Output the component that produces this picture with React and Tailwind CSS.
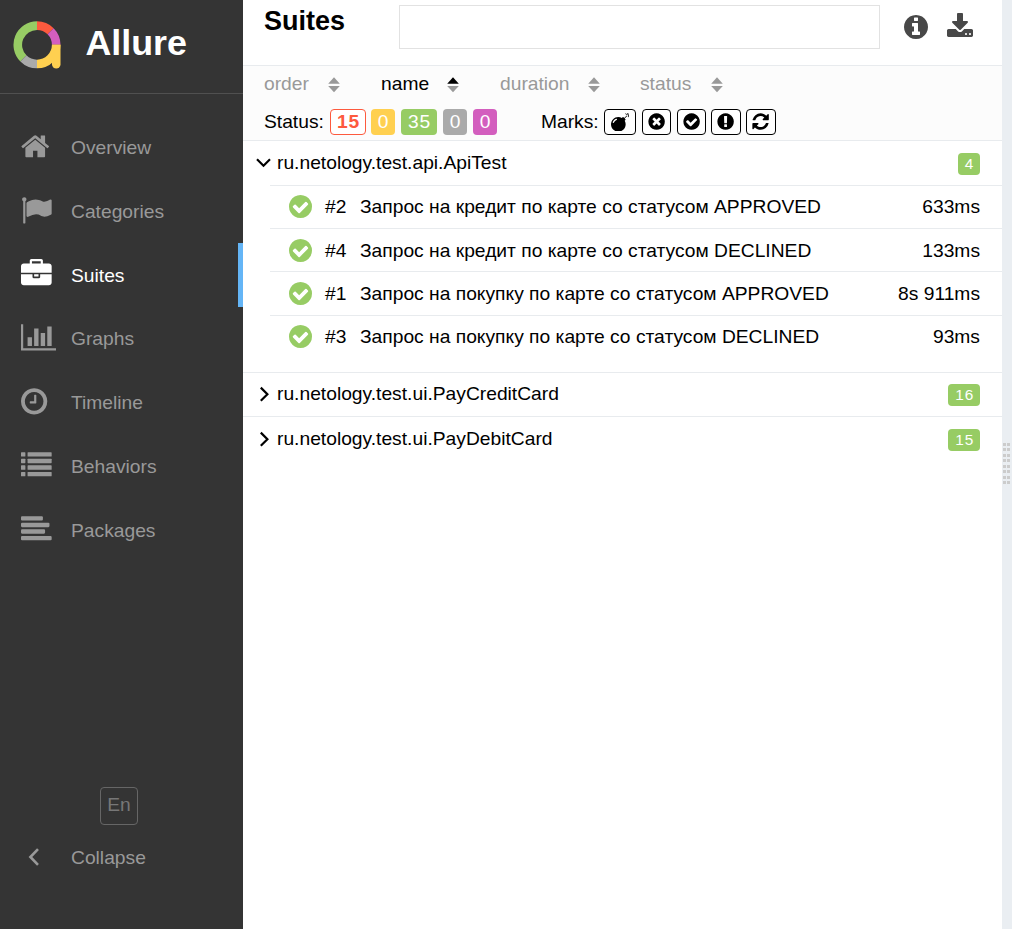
const CIRCLE =
  'm0 0q0 209-103 385.5t-279.5 279.5-385.5 103-385.5-103-279.5-279.5-103-385.5 103-385.5 279.5-279.5 385.5-103 385.5 103 279.5 279.5 103 385.5z';

const PATHS = {
  home: 'M1472 992v480q0 26-19 45t-45 19h-384v-384h-256v384h-384q-26 0-45-19t-19-45v-480q0-1 .5-3t.5-3l575-474 575 474q1 2 1 6zm223-69l-62 74q-8 9-21 11h-3q-13 0-21-7l-692-577-692 577q-12 8-24 7-13-2-21-11l-62-74q-8-10-7-23.5t11-21.5l719-599q32-26 76-26t76 26l244 204v-195q0-14 9-23t23-9h192q14 0 23 9t9 23v408l219 182q10 8 11 21.5t-7 23.5z',
  flag: 'M320 256q0 72-64 110v1266q0 13-9.5 22.5t-22.5 9.5h-64q-13 0-22.5-9.5t-9.5-22.5v-1266q-64-38-64-110 0-53 37.5-90.5t90.5-37.5 90.5 37.5 37.5 90.5zm1472 64v763q0 25-12.5 38.5t-39.5 27.5q-215 116-369 116-61 0-123.5-22t-108.5-48-115.5-48-142.5-22q-192 0-464 146-17 9-33 9-26 0-45-19t-19-45v-742q0-32 31-55 21-14 79-43 236-120 421-120 107 0 200 29t219 88q38 19 88 19 54 0 117.5-21t110-47 88-47 54.5-21q26 0 45 19t19 45z',
  briefcase: 'M640 256h512v-128h-512v128zm1152 640v480q0 66-47 113t-113 47h-1472q-66 0-113-47t-47-113v-480h672v160q0 26 19 45t45 19h320q26 0 45-19t19-45v-160h672zm-768 0v128h-256v-128h256zm768-480v384h-1792v-384q0-66 47-113t113-47h352v-160q0-40 28-68t68-28h576q40 0 68 28t28 68v160h352q66 0 113 47t47 113z',
  chart: 'M640 896v512h-256v-512h256zm384-512v1024h-256v-1024h256zm1024 1152v128h-2048v-1536h128v1408h1920zm-640-896v768h-256v-768h256zm384-384v1152h-256v-1152h256z',
  clock: 'M1024 544v448q0 14-9 23t-23 9h-320q-14 0-23-9t-9-23v-64q0-14 9-23t23-9h224v-352q0-14 9-23t23-9h64q14 0 23 9t9 23zm416 352q0-148-73-273t-198-198-273-73-273 73-198 198-73 273 73 273 198 198 273 73 273-73 198-198 73-273z',
  check: 'M1412 734q0-28-18-46l-91-90q-19-19-45-19t-45 19l-408 407-226-226q-19-19-45-19t-45 19l-91 90q-18 18-18 46 0 27 18 45l362 362q19 19 45 19 27 0 46-19l543-543q18-18 18-45z',
  times: 'M1277 1122q0-26-19-45l-181-181 181-181q19-19 19-45 0-27-19-46l-90-90q-19-19-46-19-26 0-45 19l-181 181-181-181q-19-19-45-19-27 0-46 19l-90 90q-19 19-19 46 0 26 19 45l181 181-181 181q-19 19-19 45 0 27 19 46l90 90q19 19 46 19 26 0 45-19l181-181 181 181q19 19 45 19 27 0 46-19l90-90q19-19 19-46z',
  exclamation: 'M1024 1375v-190q0-14-9-23.5t-22-9.5h-192q-13 0-23 10t-10 23v190q0 13 10 23t23 10h192q13 0 22-9.5t9-23.5zm-2-344l18-621q0-12-10-18-10-8-24-8h-220q-14 0-24 8-10 6-10 18l17 621q0 10 10 17.5t24 7.5h185q14 0 23.5-7.5t10.5-17.5z',
  info: 'M1152 1376v-160q0-14-9-23t-23-9h-96v-512q0-14-9-23t-23-9h-320q-14 0-23 9t-9 23v160q0 14 9 23t23 9h96v320h-96q-14 0-23 9t-9 23v160q0 14 9 23t23 9h448q14 0 23-9t9-23zm-128-896v-160q0-14-9-23t-23-9h-192q-14 0-23 9t-9 23v160q0 14 9 23t23 9h192q14 0 23-9t9-23z',
  refresh: 'M1639 1056q0 5-1 7-64 268-268 434.5t-478 166.5q-146 0-282.5-55t-243.5-157l-129 129q-19 19-45 19t-45-19-19-45v-448q0-26 19-45t45-19h448q26 0 45 19t19 45-19 45l-137 137q71 66 161 102t187 36q134 0 250-65t186-179q11-17 53-117 8-23 30-23h192q13 0 22.5 9.5t9.5 22.5zm25-800v448q0 26-19 45t-45 19h-448q-26 0-45-19t-19-45 19-45l138-138q-148-137-349-137-134 0-250 65t-186 179q-11 17-53 117-8 23-30 23h-199q-13 0-22.5-9.5t-9.5-22.5v-7q65-268 270-434.5t480-166.5q146 0 284 55.5t245 156.5l130-129q19-19 45-19t45 19 19 45z',
  bomb: 'M571 589q-10-25-34-35t-49 0q-108 44-191 127t-127 191q-10 25 0 49t35 34q13 5 24 5 42 0 60-40 34-84 98.5-148.5t148.5-98.5q25-11 35-35t0-49zm942-356l46 46-244 243 68 68q19 19 19 45.5t-19 45.5l-64 64q89 161 89 343 0 143-55.5 273.5t-150 225-225 150-273.5 55.5-273.5-55.5-225-150-150-225-55.5-273.5 55.5-273.5 150-225 225-150 273.5-55.5q182 0 343 89l64-64q19-19 45.5-19t45.5 19l68 68zm8-56q-10 10-22 10-13 0-23-10l-91-90q-9-10-9-23t9-23q10-9 23-9t23 9l90 91q10 9 10 22.5t-10 22.5zm230 230q-11 9-23 9t-23-9l-90-91q-10-9-10-22.5t10-22.5q9-10 22.5-10t22.5 10l91 90q9 10 9 23t-9 23zm41-183q0 14-9 23t-23 9h-96q-14 0-23-9t-9-23 9-23 23-9h96q14 0 23 9t9 23zm-192-192v96q0 14-9 23t-23 9-23-9-9-23v-96q0-14 9-23t23-9 23 9 9 23zm151 55l-91 90q-10 10-22 10-13 0-23-10-10-9-10-22.5t10-22.5l90-91q10-9 23-9t23 9q9 10 9 23t-9 23z',
  download: 'M1344 1344q0-26-19-45t-45-19-45 19-19 45 19 45 45 19 45-19 19-45zm256 0q0-26-19-45t-45-19-45 19-19 45 19 45 45 19 45-19 19-45zm128-224v320q0 40-28 68t-68 28h-1472q-40 0-68-28t-28-68v-320q0-40 28-68t68-28h465l135 136q58 56 136 56t136-56l136-136h464q40 0 68 28t28 68zm-325-569q17 41-14 70l-448 448q-18 19-45 19t-45-19l-448-448q-31-29-14-70 17-39 59-39h256v-448q0-26 19-45t45-19h256q26 0 45 19t19 45v448h256q42 0 59 39z',
};

const CIRCLED = ['clock', 'check', 'times', 'exclamation', 'info'];

function Glyph({ name, viewBox = '0 0 1792 1792', className }) {
  if (name === 'list') {
    return (
      <svg viewBox={viewBox} className={className} fill="currentColor">
        {[128, 512, 896, 1280].map((y) => (
          <g key={y}>
            <rect x="0" y={y} width="256" height="256" rx="32" />
            <rect x="384" y={y} width="1408" height="256" rx="32" />
          </g>
        ))}
      </svg>
    );
  }
  if (name === 'align') {
    return (
      <svg viewBox={viewBox} className={className} fill="currentColor">
        <rect y="128" width="1280" height="256" rx="64" />
        <rect y="512" width="1664" height="256" rx="64" />
        <rect y="896" width="1408" height="256" rx="64" />
        <rect y="1280" width="1792" height="256" rx="64" />
      </svg>
    );
  }
  const d = CIRCLED.includes(name) ? PATHS[name] + 'M1664 896' + CIRCLE : PATHS[name];
  return (
    <svg viewBox={viewBox} className={className} fill="currentColor" fillRule="evenodd">
      <path d={d} />
    </svg>
  );
}

function Logo() {
  return (
    <svg viewBox="0 0 48 48" className="h-12 w-12" fill="none" strokeWidth="8.6">
      <path d="M24 4.6A19.2 19.2 0 0 1 37.58 10.22" stroke="#fd5a3e" />
      <path d="M37.58 10.22A19.2 19.2 0 0 1 43.2 23.8" stroke="#d35ebe" />
      <path d="M10.42 37.38A19.2 19.2 0 0 1 24 4.6" stroke="#97cc64" />
      <path d="M24 43A19.2 19.2 0 0 1 10.42 37.38" stroke="#aaa" />
      <path d="M43.2 23.8A19.2 19.2 0 0 1 24 43" stroke="#ffd050" />
      <path d="M39 23.8h8.5v19.5a4.25 4.25 0 0 1-8.5 0z" fill="#ffd050" stroke="none" />
    </svg>
  );
}

const NAV = [
  { icon: 'home', label: 'Overview', viewBox: '64 0 1792 1792' },
  { icon: 'flag', label: 'Categories' },
  { icon: 'briefcase', label: 'Suites', active: true },
  { icon: 'chart', label: 'Graphs', viewBox: '0 0 2048 1792', wide: true },
  { icon: 'clock', label: 'Timeline', viewBox: '128 0 1792 1792' },
  { icon: 'list', label: 'Behaviors' },
  { icon: 'align', label: 'Packages' },
];

function Sidebar() {
  return (
    <aside className="flex w-[243px] shrink-0 flex-col bg-[#343434] text-[#999]">
      <div className="flex h-[94px] items-center border-b border-[#505050] pb-1 pl-[12.5px]">
        <Logo />
        <span className="ml-[25px] pb-px text-[35.8px] leading-none font-bold text-white">Allure</span>
      </div>
      <nav className="mt-[21.3px]">
        {NAV.map((item) => (
          <div
            key={item.label}
            className={
              'flex h-[63.85px] items-center pl-[21px] ' +
              (item.active ? 'border-r-5 border-[#64b5f6] text-white' : '')
            }
          >
            <div className="w-[50px] pb-[2px]">
              <Glyph
                name={item.icon}
                viewBox={item.viewBox}
                className={item.wide ? 'h-[30.67px] w-[35.05px]' : 'h-[30.67px] w-[30.67px]'}
              />
            </div>
            <span className={item.active ? 'pt-[2px]' : 'pt-px'}>{item.label}</span>
          </div>
        ))}
      </nav>
      <div className="mt-auto ml-[100px] flex h-[38px] w-[38px] items-center justify-center rounded border border-[#666] pb-0.5 text-[#777]">
        En
      </div>
      <div className="mt-[17px] mb-[56px] flex h-[31px] items-center pl-[21px]">
        <div className="w-[50px] pb-px pl-[7px]">
          <svg viewBox="0 0 12 18" className="h-[18px] w-3" fill="none" stroke="currentColor" strokeWidth="2.6">
            <path d="M10 1.2L2.4 9l7.6 7.8" />
          </svg>
        </div>
        <span>Collapse</span>
      </div>
    </aside>
  );
}

function Sorter({ label, active, className }) {
  return (
    <div className={'flex items-center justify-between ' + className + (active ? ' text-black' : ' text-[#999]')}>
      <span>{label}</span>
      <svg viewBox="0 0 12 16" className="mt-0.5 h-4 w-3">
        <path d="M6 0.3L11.8 6.7H0.2z" fill={active ? '#000' : '#999'} />
        <path d="M6 15.3L11.8 9H0.2z" fill="#999" />
      </svg>
    </div>
  );
}

const STATUSES = [
  { n: 15, cls: 'w-9 border border-[#fd5a3e] bg-white font-bold text-[#fd5a3e] pb-px' },
  { n: 0, cls: 'w-6 ml-[5px] bg-[#ffd050] text-white' },
  { n: 35, cls: 'w-9 ml-[6px] bg-[#97cc64] text-white' },
  { n: 0, cls: 'w-6 ml-[6px] bg-[#aaa] text-white' },
  { n: 0, cls: 'w-6 ml-[6px] bg-[#d35ebe] text-white' },
];

const MARKS = [
  { icon: 'bomb', cls: 'w-8 ml-[6px]', size: 'h-[18.67px] w-[18.67px]' },
  { icon: 'times', cls: 'w-[29px] ml-[6px]', size: 'h-[19.2px] w-[19.2px]' },
  { icon: 'check', cls: 'w-[29px] ml-[6px]', size: 'h-[19.2px] w-[19.2px]' },
  { icon: 'exclamation', cls: 'w-[30px] ml-[5px]', size: 'h-[19.2px] w-[19.2px]' },
  { icon: 'refresh', cls: 'w-[30px] ml-[5px]', size: 'h-[19.2px] w-[19.2px]' },
];

const TESTS = [
  { id: '#2', name: 'Запрос на кредит по карте со статусом APPROVED', time: '633ms', cls: 'h-[43px] pb-px' },
  { id: '#4', name: 'Запрос на кредит по карте со статусом DECLINED', time: '133ms', cls: 'h-[43px] pt-px' },
  { id: '#1', name: 'Запрос на покупку по карте со статусом APPROVED', time: '8s 911ms', cls: 'h-[44px]' },
  { id: '#3', name: 'Запрос на покупку по карте со статусом DECLINED', time: '93ms', cls: 'h-[43px] pb-px' },
];

function Group({ name, count, open, className }) {
  return (
    <div className={'flex items-center pr-[22px] ' + className}>
      <div className="flex w-[34px] items-center pl-[13px]">
        <svg viewBox="0 0 16 16" className="h-4 w-4" fill="none" stroke="#000" strokeWidth="2.2">
          <path d={open ? 'M1 4.3l6.5 6.5 6.5-6.5' : 'M4.8 1.6l6.6 6.6-6.6 6.6'} />
        </svg>
      </div>
      <span>{name}</span>
      <span className="mt-0.5 ml-auto flex h-[22px] items-center rounded bg-[#97cc64] px-[6.8px] text-[15.4px] tracking-[0.8px] text-white">
        <span className="-mr-[0.8px]">{count}</span>
      </span>
    </div>
  );
}

export default function App() {
  return (
    <div className="flex h-[929px] w-[1017px] overflow-hidden bg-white font-['Liberation_Sans',Arial,sans-serif] text-[19.24px] leading-[22px] text-black">
      <Sidebar />
      <main className="flex w-[759px] shrink-0 flex-col">
        <header className="flex h-[65px] items-start">
          <h1 className="w-[156px] pt-[6px] pl-[21px] text-[27px] leading-[30px] font-bold">Suites</h1>
          <div className="mt-[5px] h-11 w-[481px] border border-[#e2e2e2]" />
          <Glyph name="info" viewBox="128 128 1536 1536" className="mt-[15px] ml-[23.5px] h-6 w-6 text-[#484848]" />
          <Glyph name="download" viewBox="0 0 1728 1536" className="mt-[13px] ml-[18.5px] h-6 w-[27px] text-[#484848]" />
        </header>
        <section className="h-[76px] border-y border-[#e8ebee] bg-[#fcfcfc]">
          <div className="flex h-9 items-center pl-[21px]">
            <Sorter label="order" className="w-[76px]" />
            <Sorter label="name" active className="ml-[41px] w-[78px]" />
            <Sorter label="duration" className="ml-[41px] w-[100px]" />
            <Sorter label="status" className="ml-10 w-[83px]" />
          </div>
          <div className="mt-[7px] flex h-[26px] items-center pl-[21px]">
            <span className="w-[66px]">Status:</span>
            {STATUSES.map((s, i) => (
              <span
                key={i}
                className={'flex h-[26px] items-center justify-center rounded tracking-[0.8px] ' + s.cls}
              >
                <span className="-mr-[0.8px]">{s.n}</span>
              </span>
            ))}
            <span className="ml-11 w-[57px] whitespace-nowrap">Marks:</span>
            {MARKS.map((m) => (
              <span
                key={m.icon}
                className={'flex h-[26px] items-center justify-center rounded border border-black bg-white ' + m.cls}
              >
                <Glyph name={m.icon} className={m.size} />
              </span>
            ))}
          </div>
        </section>
        <Group name="ru.netology.test.api.ApiTest" count="4" open className="h-11" />
        <div className="pb-[14px] pl-[27px]">
          {TESTS.map((t) => (
            <div key={t.id} className={'flex items-center border-t border-[#e8ebee] pr-[22px] pl-[19px] ' + t.cls}>
              <Glyph name="check" viewBox="128 128 1536 1536" className="h-[23px] w-[23px] text-[#97cc64]" />
              <span className="ml-[13px] w-[35px]">{t.id}</span>
              <span>{t.name}</span>
              <span className="ml-auto">{t.time}</span>
            </div>
          ))}
        </div>
        <Group
          name="ru.netology.test.ui.PayCreditCard"
          count="16"
          className="h-11 border-t border-[#e8ebee] pb-[2px]"
        />
        <Group name="ru.netology.test.ui.PayDebitCard" count="15" className="h-11 border-t border-[#e8ebee]" />
      </main>
      <div className="flex w-[10px] items-center bg-[#eaeef2] pb-[2px] pl-px">
        <div className="grid grid-cols-2 gap-x-[1px] gap-y-[2.5px]">
          {Array.from({ length: 16 }, (_, i) => (
            <div key={i} className="h-[3px] w-[3px] bg-[#ccc]" />
          ))}
        </div>
      </div>
    </div>
  );
}
